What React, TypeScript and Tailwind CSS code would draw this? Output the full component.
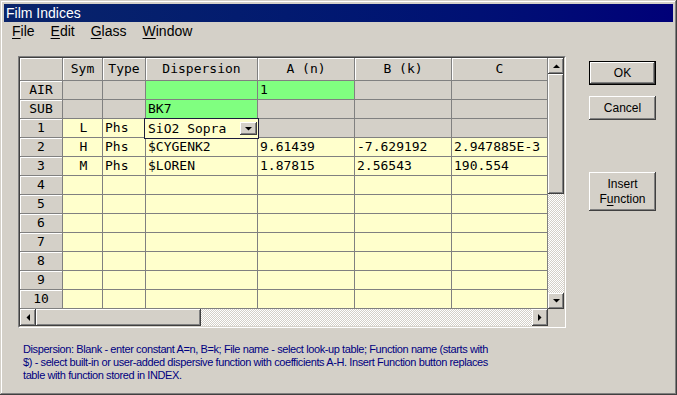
const raised =
  "bg-[#d4d0c8] shadow-[inset_-1px_-1px_#404040,inset_1px_1px_#ffffff,inset_-2px_-2px_#808080]";
const dither =
  "bg-[repeating-conic-gradient(#d4d0c8_0_25%,#ffffff_0_50%)] bg-[length:2px_2px]";

type Kind = "g" | "G" | "y" | "combo";

const rows: { head: string; cells: [Kind, string][] }[] = [
  {
    head: "AIR",
    cells: [["g", ""], ["g", ""], ["G", ""], ["G", "1"], ["g", ""], ["g", ""]],
  },
  {
    head: "SUB",
    cells: [["g", ""], ["g", ""], ["G", "BK7"], ["g", ""], ["g", ""], ["g", ""]],
  },
  {
    head: "1",
    cells: [["y", "L"], ["y", "Phs"], ["combo", "SiO2 Sopra"], ["g", ""], ["g", ""], ["g", ""]],
  },
  {
    head: "2",
    cells: [["y", "H"], ["y", "Phs"], ["y", "$CYGENK2"], ["y", "9.61439"], ["y", "-7.629192"], ["y", "2.947885E-3"]],
  },
  {
    head: "3",
    cells: [["y", "M"], ["y", "Phs"], ["y", "$LOREN"], ["y", "1.87815"], ["y", "2.56543"], ["y", "190.554"]],
  },
  ...["4", "5", "6", "7", "8", "9", "10"].map((h) => ({
    head: h,
    cells: [0, 1, 2, 3, 4, 5].map(() => ["y", ""] as [Kind, string]),
  })),
];

const headers = ["Sym", "Type", "Dispersion", "A (n)", "B (k)", "C"];

function Arrow({ dir }: { dir: "up" | "down" | "left" | "right" }) {
  const pts = {
    up: "0,4 7,4 3.5,0.5",
    down: "0,0 7,0 3.5,3.5",
    left: "4,0 4,7 0.5,3.5",
    right: "0,0 0,7 3.5,3.5",
  }[dir];
  const vertical = dir === "up" || dir === "down";
  return (
    <svg width={vertical ? 7 : 4} height={vertical ? 4 : 7} className="block">
      <polygon points={pts} fill="#000" />
    </svg>
  );
}

function Cell({ kind, text, col }: { kind: Kind; text: string; col: number }) {
  const bg =
    kind === "G" ? "bg-[#80ff80]" : kind === "g" ? "bg-[#d4d0c8]" : "bg-[#ffffcc]";
  if (kind === "combo") {
    return (
      <div className="relative h-[19px] border-r border-b border-[#808080] bg-[#ffffcc]">
        <div className="absolute -top-px -left-[2px] z-10 flex h-[21px] w-[115px] items-center border border-[#1c1c3c] bg-[#ffffcc] pl-[3px]">
          <span className="flex-1">{text}</span>
          <div className={`${raised} mr-[1px] flex h-[13px] w-[17px] items-center justify-center`}>
            <Arrow dir="down" />
          </div>
        </div>
      </div>
    );
  }
  return (
    <div
      className={`flex h-[19px] items-center overflow-hidden whitespace-nowrap border-r border-b border-[#808080] pl-[2px] ${bg} ${
        col === 0 ? "justify-center pl-0" : ""
      }`}
    >
      {text}
    </div>
  );
}

export default function App() {
  return (
    <div className="h-[395px] w-[677px] overflow-hidden bg-[#d4d0c8] p-[4px] font-['Tahoma','Liberation_Sans',sans-serif] shadow-[inset_-1px_-1px_#404040,inset_1px_1px_#d4d0c8,inset_-2px_-2px_#808080,inset_2px_2px_#ffffff]">
      <div className="flex h-[18px] items-center bg-linear-to-r from-[#0a246a] to-[#000078] pl-[2px] text-[14px] text-white">
        Film Indices
      </div>

      <div className="flex h-[19px] items-center text-[14px] text-black">
        {["File", "Edit", "Glass", "Window"].map((m) => (
          <span key={m} className="px-2">
            <span className="underline underline-offset-2">{m[0]}</span>
            {m.slice(1)}
          </span>
        ))}
      </div>

      <div className="mt-[15px] flex">
        <div className="ml-[14px] h-[272px] w-[548px] border-t border-l border-t-[#808080] border-l-[#808080] border-r border-b border-r-white border-b-white">
          <div className="h-full w-full border-t border-l border-t-[#404040] border-l-[#404040] border-r border-b border-r-[#d4d0c8] border-b-[#d4d0c8]">
            <div className="flex">
              <div className="w-[528px] overflow-hidden font-['DejaVu_Sans_Mono',monospace] text-[13px] text-black">
                <div className="grid grid-cols-[43px_40px_43px_112px_97px_97px_96px]">
                  <div className="h-[23px] border-r border-b border-[#808080] bg-[#d4d0c8] shadow-[inset_1px_1px_#ffffff]" />
                  {headers.map((h) => (
                    <div
                      key={h}
                      className="flex h-[23px] items-center justify-center border-r border-b border-[#808080] bg-[#d4d0c8] shadow-[inset_1px_1px_#ffffff]"
                    >
                      {h}
                    </div>
                  ))}
                  {rows.map((r) => (
                    <div key={r.head} className="contents">
                      <div className="flex h-[19px] items-center justify-center border-r border-b border-[#808080] bg-[#d4d0c8] shadow-[inset_1px_1px_#ffffff]">
                        {r.head}
                      </div>
                      {r.cells.map(([k, t], i) => (
                        <Cell key={i} kind={k} text={t} col={i} />
                      ))}
                    </div>
                  ))}
                </div>
              </div>
              <div className="flex h-[251px] w-[16px] flex-col">
                <div className={`${raised} flex h-[16px] items-center justify-center`}>
                  <Arrow dir="up" />
                </div>
                <div className={`${raised} h-[120px]`} />
                <div className={`${dither} flex-1`} />
                <div className={`${raised} flex h-[16px] items-center justify-center`}>
                  <Arrow dir="down" />
                </div>
              </div>
            </div>
            <div className="flex h-[17px]">
              <div className={`${raised} flex w-[16px] items-center justify-center`}>
                <Arrow dir="left" />
              </div>
              <div className={`${raised} w-[165px]`} />
              <div className={`${dither} flex-1`} />
              <div className={`${raised} flex w-[16px] items-center justify-center`}>
                <Arrow dir="right" />
              </div>
              <div className="w-[16px] bg-[#d4d0c8]" />
            </div>
          </div>
        </div>

        <div className="ml-[23px] flex flex-col pt-[5px] text-[12px] text-black">
          <div className="h-[24px] w-[67px] border border-black">
            <div className={`${raised} flex h-full w-full items-center justify-center`}>OK</div>
          </div>
          <div className={`${raised} mt-[11px] flex h-[24px] w-[67px] items-center justify-center`}>
            Cancel
          </div>
          <div
            className={`${raised} mt-[52px] flex h-[39px] w-[67px] flex-col items-center justify-center leading-[15px]`}
          >
            <span>Insert</span>
            <span>
              F<span className="underline underline-offset-2">u</span>nction
            </span>
          </div>
        </div>
      </div>

      <p className="mt-[15px] ml-[19px] text-[11px] leading-[13px] tracking-[-0.4px] text-[#000080]">
        Dispersion: Blank - enter constant A=n, B=k; File name - select look-up table; Function name (starts with
        <br />
        $) - select built-in or user-added dispersive function with coefficients A-H. Insert Function button replaces
        <br />
        table with function stored in INDEX.
      </p>
    </div>
  );
}
